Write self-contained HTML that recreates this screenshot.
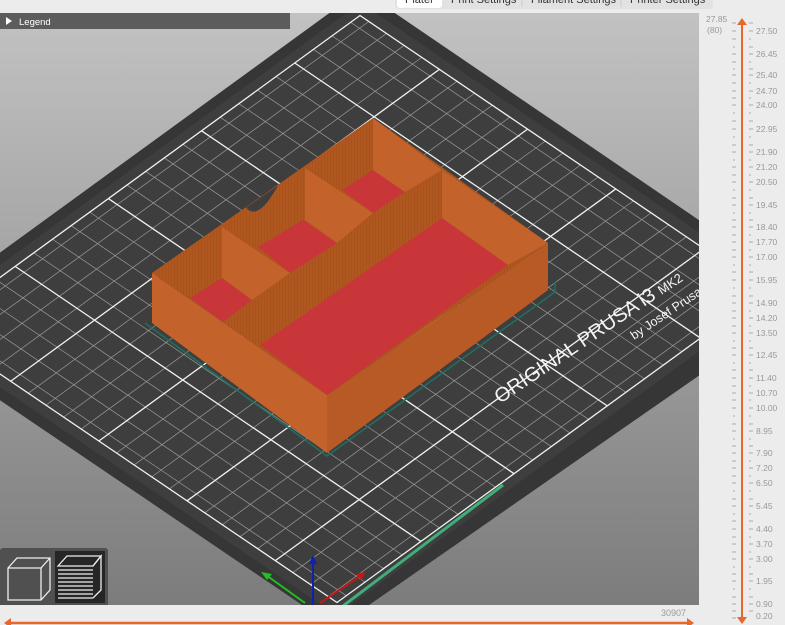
<!DOCTYPE html>
<html><head><meta charset="utf-8"><style>
html,body{margin:0;padding:0;width:785px;height:625px;overflow:hidden;background:#ececec;font-family:"Liberation Sans",sans-serif}
svg{position:absolute;left:0;top:0}
</style></head><body>
<svg width="785" height="625" viewBox="0 0 785 625" xmlns="http://www.w3.org/2000/svg">
<defs>
<linearGradient id="bg" x1="0" y1="0" x2="0" y2="1">
<stop offset="0" stop-color="#c2c2c2"/><stop offset="1" stop-color="#7c7c7c"/></linearGradient>
<pattern id="st" width="3" height="10" patternUnits="userSpaceOnUse">
<rect width="3" height="10" fill="#b0571f"/><rect width="1" height="10" fill="#a8521d"/></pattern>
<clipPath id="vp"><rect x="0" y="13" width="699" height="592"/></clipPath>
</defs>
<rect x="0" y="0" width="785" height="625" fill="#ececec"/>
<!-- tabs -->
<rect x="395" y="-6" width="318" height="15" rx="4" fill="#e2e2e2"/>
<rect x="397" y="-6" width="45" height="14" rx="3" fill="#fff"/>
<g font-size="11" fill="#333" >
<text x="405" y="3">Plater</text>
<text x="451" y="3">Print Settings</text>
<text x="531" y="3">Filament Settings</text>
<text x="630" y="3">Printer Settings</text>
</g>
<line x1="522" y1="0" x2="522" y2="7" stroke="#ccc"/><line x1="621" y1="0" x2="621" y2="7" stroke="#ccc"/>
<g clip-path="url(#vp)">
<rect x="0" y="13" width="699" height="592" fill="url(#bg)"/>
<polygon points="361,-10 812,297 336,628 -105,329" fill="#363636"/>
<g transform="matrix(4.66,-3.39,4.41,2.99,-105,329)">
<rect x="2" y="2" width="96" height="96" fill="#3e3e3e"/>
<g stroke="#9a9a9a" stroke-width="0.7" fill="none">
<path vector-effect="non-scaling-stroke" d="M6 4V96M10 4V96M14 4V96M18 4V96M26 4V96M30 4V96M34 4V96M38 4V96M46 4V96M50 4V96M54 4V96M58 4V96M66 4V96M70 4V96M74 4V96M78 4V96M86 4V96M90 4V96M94 4V96M4 6H96M4 10H96M4 14H96M4 18H96M4 26H96M4 30H96M4 34H96M4 38H96M4 46H96M4 50H96M4 54H96M4 58H96M4 66H96M4 70H96M4 74H96M4 78H96M4 86H96M4 90H96M4 94H96"/>
</g>
<g stroke="#f2f2f2" stroke-width="1.3" fill="none">
<path vector-effect="non-scaling-stroke" d="M4 4H96V96H4ZM22 4V96M42 4V96M62 4V96M82 4V96M4 22H96M4 42H96M4 62H96M4 82H96"/>
</g>
</g>
<text x="0" y="0" font-size="20" fill="#f4f4f4" transform="translate(500,404) rotate(-34)">ORIGINAL PRUSA i3 <tspan font-size="13">MK2</tspan></text>
<text x="0" y="0" font-size="12.5" fill="#f4f4f4" transform="translate(634,340) rotate(-34)">by Josef Prusa</text>
<line x1="503" y1="485" x2="335" y2="612" stroke="#3fae7a" stroke-width="3"/>
<!-- skirt -->
<polyline points="145,323 327,456 555,292 555,282" fill="none" stroke="#1f7060" stroke-width="1.5"/>
<!-- object -->
<polygon points="152,273 373,118 548,243 327,395" fill="url(#st)"/>
<polygon points="152,273 327,395 327,453 152,323" fill="#c4622b"/>
<polygon points="327,395 548,243 548,290 327,453" fill="#b85a25"/>
<polygon points="442,170 548,243 508,265 442,218" fill="#c4622b"/>
<polygon points="260,345 442,218 508,265 327,395" fill="#c8363a"/>
<polygon points="223,322 442,170 442,218 260,345" fill="url(#st)"/>
<polygon points="222,227 290,273 252,300 222,278" fill="#c4622b"/>
<polygon points="190,298 222,278 252,300 223,322" fill="#c8363a"/>
<polygon points="258,247 303,220 337,243 290,273" fill="#c8363a"/>
<polygon points="305,168 373,213 337,243 305,220" fill="#c4622b"/>
<polygon points="342,190 373,170 405,192 373,213" fill="#c8363a"/>
<polygon points="373,118 442,170 405,192 373,170" fill="#c4622b"/>
<path d="M246,207.5 Q258,222 278,185.5 Z" fill="#3e3e3e"/>
<!-- axes -->
<line x1="313" y1="605" x2="313" y2="562" stroke="#1020b0" stroke-width="2"/>
<polygon points="309,564 317,564 313,555" fill="#1020b0"/>
<line x1="305" y1="603" x2="266" y2="575" stroke="#20c020" stroke-width="2"/>
<polygon points="261,572 272,574 267,580" fill="#20c020"/>
<line x1="320" y1="603" x2="360" y2="576" stroke="#c01818" stroke-width="2"/>
<polygon points="366,572 356,574 361,580" fill="#c01818"/>
<!-- legend -->
<rect x="0" y="13" width="290" height="16" fill="#5c5c5c"/>
<polygon points="6,17 6,25 12,21" fill="#fff"/>
<text x="19" y="25" font-size="9.5" fill="#fff">Legend</text>
<!-- view buttons -->
<rect x="0" y="548" width="108" height="60" rx="3" fill="#505050"/>
<rect x="55" y="551" width="50" height="52" fill="#262626"/>
<g fill="none" stroke="#eee" stroke-width="1.3">
<path d="M8,568 L17,558 L50,558 L50,590 L41,600 L8,600Z M8,568 L41,568 L41,600 M41,568 L50,558"/>
<path d="M58,566 L67,556 L101,556 L93,566Z"/>
<path d="M58,570H93M58,574H93M58,578H93M58,582H93M58,586H93M58,590H93M58,594H93M58,598H93M93,566L101,556V590L93,598"/>
</g>
</g>
<!-- right slider -->
<line x1="742" y1="25" x2="742" y2="618" stroke="#e8672a" stroke-width="2"/>
<polygon points="737,25 747,25 742,18" fill="#e8672a"/>
<polygon points="737,617 747,617 742,624" fill="#e8672a"/>
<text x="706" y="22" font-size="8.5" fill="#999">27.85</text>
<text x="707" y="33" font-size="8.5" fill="#999">(80)</text>
<g stroke="#aaa" stroke-width="1">
<path d="M732,23h4M732,31h4M732,39h4M733,47h2M732,54h4M732,62h4M733,69h2M732,75h4M732,83h4M732,91h4M732,98h4M732,105h4M733,113h2M732,121h4M732,129h4M733,137h2M732,145h4M732,152h4M733,160h2M732,167h4M732,175h4M732,182h4M733,190h2M732,198h4M732,205h4M733,213h2M732,220h4M732,227h4M732,235h4M732,242h4M732,250h4M732,257h4M733,265h2M732,272h4M732,280h4M733,288h2M732,296h4M732,303h4M732,311h4M732,318h4M732,326h4M732,333h4M733,341h2M732,348h4M732,355h4M733,363h2M732,370h4M732,378h4M732,386h4M732,393h4M732,400h4M732,408h4M733,416h2M732,424h4M732,431h4M733,439h2M732,446h4M732,453h4M732,461h4M732,468h4M732,476h4M732,483h4M733,491h2M732,499h4M732,506h4M733,514h2M732,521h4M732,529h4M732,537h4M732,544h4M732,552h4M732,559h4M733,567h2M732,574h4M732,581h4M733,589h2M732,597h4M732,604h4M732,611h4M732,618h4"/>
<path d="M749,23h4M749,31h4M749,39h2M749,47h4M749,54h4M749,62h2M749,69h4M749,75h4M749,83h2M749,91h4M749,98h2M749,105h4M749,113h2M749,121h4M749,129h4M749,137h2M749,145h4M749,152h4M749,160h2M749,167h4M749,175h2M749,182h4M749,190h2M749,198h4M749,205h4M749,213h2M749,220h4M749,227h4M749,235h2M749,242h4M749,250h2M749,257h4M749,265h2M749,272h4M749,280h4M749,288h2M749,296h4M749,303h4M749,311h2M749,318h4M749,326h2M749,333h4M749,341h2M749,348h4M749,355h4M749,363h2M749,370h4M749,378h4M749,386h2M749,393h4M749,400h2M749,408h4M749,416h2M749,424h4M749,431h4M749,439h2M749,446h4M749,453h4M749,461h2M749,468h4M749,476h2M749,483h4M749,491h2M749,499h4M749,506h4M749,514h2M749,521h4M749,529h4M749,537h2M749,544h4M749,552h2M749,559h4M749,567h2M749,574h4M749,581h4M749,589h2M749,597h4M749,604h4M749,611h4"/>
</g>
<g font-size="8.5" fill="#999">
<text x="756" y="34">27.50</text><text x="756" y="57">26.45</text><text x="756" y="78">25.40</text><text x="756" y="94">24.70</text><text x="756" y="108">24.00</text><text x="756" y="132">22.95</text><text x="756" y="155">21.90</text><text x="756" y="170">21.20</text><text x="756" y="185">20.50</text><text x="756" y="208">19.45</text><text x="756" y="230">18.40</text><text x="756" y="245">17.70</text><text x="756" y="260">17.00</text><text x="756" y="283">15.95</text><text x="756" y="306">14.90</text><text x="756" y="321">14.20</text><text x="756" y="336">13.50</text><text x="756" y="358">12.45</text><text x="756" y="381">11.40</text><text x="756" y="396">10.70</text><text x="756" y="411">10.00</text><text x="756" y="434">8.95</text><text x="756" y="456">7.90</text><text x="756" y="471">7.20</text><text x="756" y="486">6.50</text><text x="756" y="509">5.45</text><text x="756" y="532">4.40</text><text x="756" y="547">3.70</text><text x="756" y="562">3.00</text><text x="756" y="584">1.95</text><text x="756" y="607">0.90</text><text x="756" y="619">0.20</text>
</g>
<!-- bottom -->
<text x="661" y="616" font-size="9" fill="#999">30907</text>
<line x1="8" y1="623" x2="690" y2="623" stroke="#e8672a" stroke-width="2.5"/>
<polygon points="4,623 11,618 11,628" fill="#e8672a"/>
<polygon points="694,623 687,618 687,628" fill="#e8672a"/>
</svg>
</body></html>
